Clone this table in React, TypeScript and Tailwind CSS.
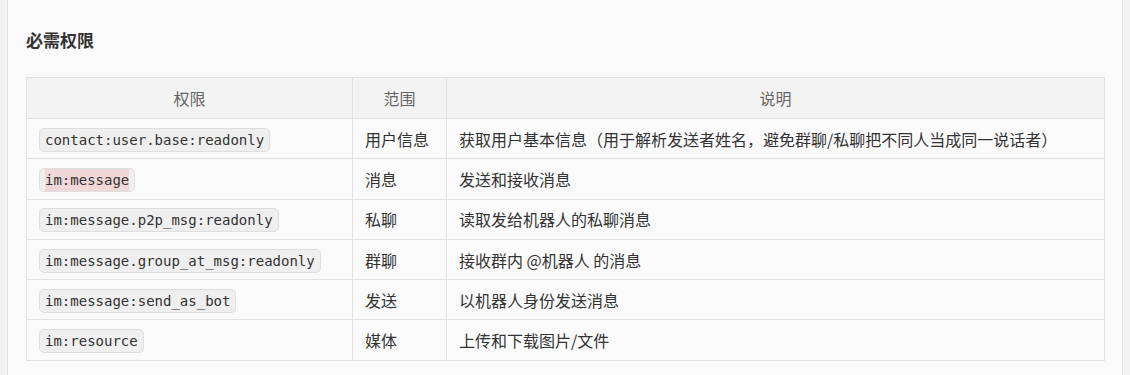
import React from "react";

const rows: { code: string; scope: string; desc: string; hl?: boolean }[] = [
  { code: "contact:user.base:readonly", scope: "用户信息", desc: "获取用户基本信息（用于解析发送者姓名，避免群聊/私聊把不同人当成同一说话者）" },
  { code: "im:message", scope: "消息", desc: "发送和接收消息", hl: true },
  { code: "im:message.p2p_msg:readonly", scope: "私聊", desc: "读取发给机器人的私聊消息" },
  { code: "im:message.group_at_msg:readonly", scope: "群聊", desc: "接收群内 @机器人 的消息" },
  { code: "im:message:send_as_bot", scope: "发送", desc: "以机器人身份发送消息" },
  { code: "im:resource", scope: "媒体", desc: "上传和下载图片/文件" },
];

export default function App() {
  return (
    <div className="flex h-[375px] w-[1130px] bg-[#f3f3f3] font-['Noto_Sans_CJK_SC',sans-serif] text-[#333]">
      <div className="w-[8px] shrink-0 border-r border-[#e3e3e3]" />
      <div className="w-[1115px] shrink-0 border-r border-[#e3e3e3] bg-[#fafafa] px-[18px] pt-[30px]">
        <h2 className="text-[17px] font-bold leading-[20px] text-[#333]">必需权限</h2>
        <table className="mt-[27px] w-[1078px] table-fixed border-collapse text-[16px]">
          <colgroup>
            <col className="w-[326px]" />
            <col className="w-[94px]" />
            <col className="w-[658px]" />
          </colgroup>
          <thead>
            <tr className="h-[41px] bg-[#f3f3f3]">
              <th className="border border-[#e2e2e2] px-3 text-center font-normal text-[#666]">权限</th>
              <th className="border border-[#e2e2e2] px-3 text-center font-normal text-[#666]">范围</th>
              <th className="border border-[#e2e2e2] px-3 text-center font-normal text-[#666]">说明</th>
            </tr>
          </thead>
          <tbody>
            {rows.map((r) => (
              <tr key={r.code} className="h-[40.3px]">
                <td className="border border-[#e2e2e2] px-3 py-0">
                  <code className="inline-flex h-[24px] items-stretch rounded-[5px] border border-[#dedede] bg-[#efefef] px-[5px] font-['DejaVu_Sans_Mono',monospace] text-[14px] leading-[22px] text-[#333]">
                    <span className={r.hl ? "bg-[#efd8d7]" : ""}>{r.code}</span>
                  </code>
                </td>
                <td className="border border-[#e2e2e2] px-3 py-0">{r.scope}</td>
                <td className="border border-[#e2e2e2] px-3 py-0">{r.desc}</td>
              </tr>
            ))}
          </tbody>
        </table>
      </div>
      <div className="flex-1" />
    </div>
  );
}
